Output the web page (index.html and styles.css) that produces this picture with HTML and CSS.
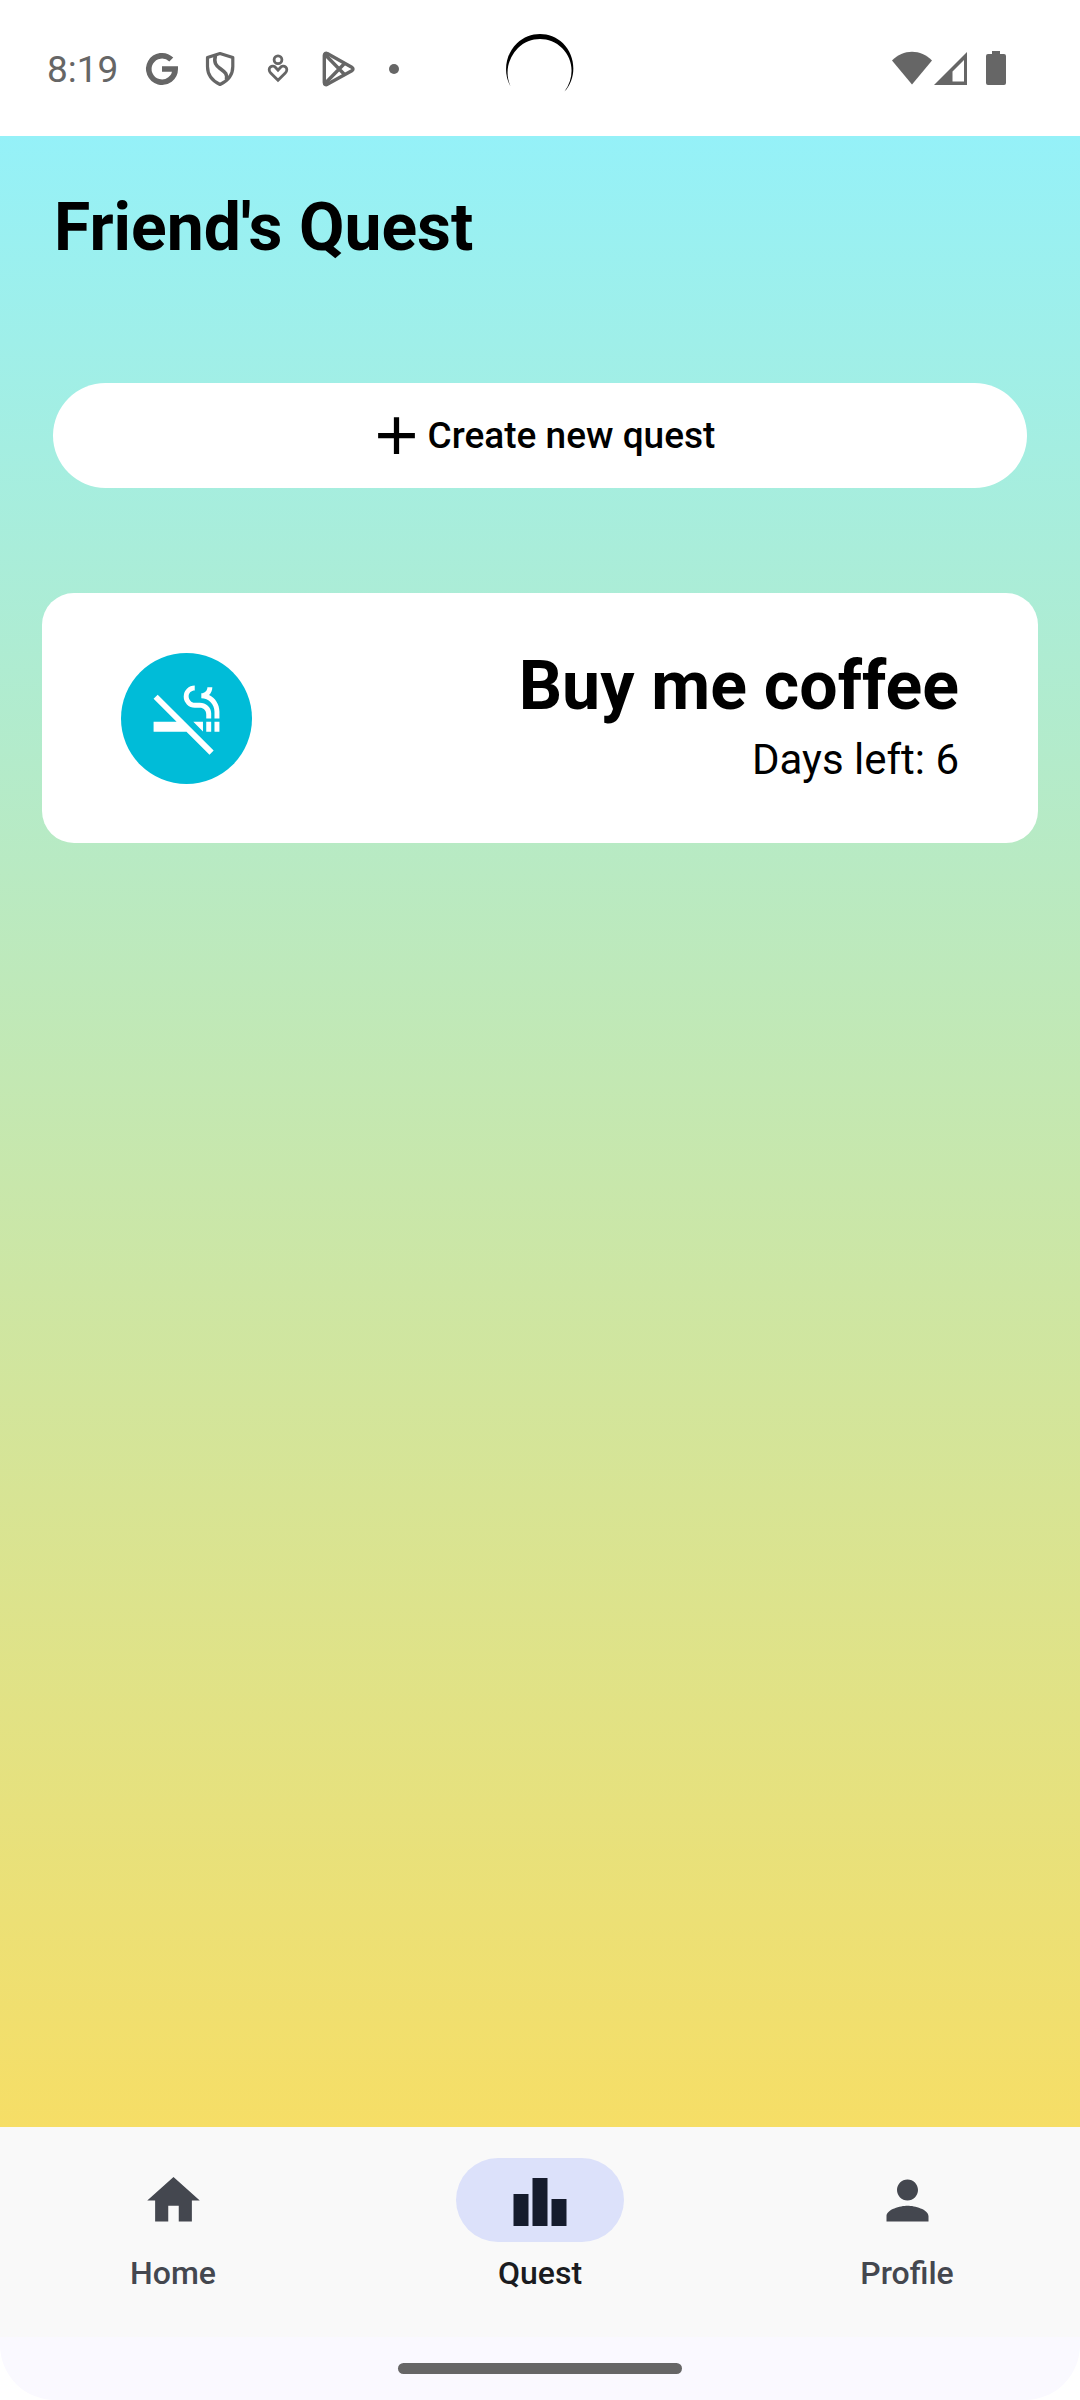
FILE: index.html
```html
<!DOCTYPE html>
<html lang="en">
<head>
<meta charset="utf-8">
<meta name="viewport" content="width=device-width, initial-scale=1">
<title>Friend's Quest</title>
<link rel="stylesheet" href="styles.css">
</head>
<body>
<header class="status">
  <time class="status-time">8:19</time>
  <div class="status-notes">
    <svg class="note" viewBox="0 0 42 42" aria-hidden="true"><path d="M30.300 12.600 A13.200 13.200 0 1 0 34.200 22 H21" fill="none" stroke="currentColor" stroke-width="5.600"/></svg>
    <svg class="note" viewBox="0 0 42 42" aria-hidden="true"><g fill="none" stroke="currentColor" stroke-width="3.200" stroke-linejoin="round"><path d="M21 6.500 8.500 10.500v9c0 8 5 14.500 12.500 18C28.500 34 33.800 27.500 33.800 19.500v-9z"/><path d="M16.500 8c-2 8 .5 10.500 4.500 13.500 5 3.700 7.500 5 6.500 11" stroke-width="3.600"/></g></svg>
    <svg class="note" viewBox="0 0 42 42" aria-hidden="true"><g fill="none" stroke="currentColor" stroke-width="2.800"><circle cx="21" cy="12.700" r="3.900"/><path d="M21 33.300 13.700 26c-2-2-1.900-4.500-.4-5.900 1.500-1.300 4-1.200 5.300.4l2.400 2.700 2.400-2.700c1.300-1.600 3.800-1.700 5.300-.4 1.500 1.400 1.600 3.900-.4 5.900z"/></g></svg>
    <svg class="note" viewBox="0 0 42 42" aria-hidden="true"><g fill="none" stroke="currentColor" stroke-width="3.400" stroke-linejoin="round"><path d="M9.300 8.500v27c0 2 1.500 2.700 3 1.800l24.500-13.600c1.600-1 1.600-2.600 0-3.500L12.300 6.600c-1.500-.9-3-.1-3 1.900z"/><path d="M10 7.500 29.500 27.500M10 36.500 29.500 16.500"/></g></svg>
    <svg class="note" viewBox="0 0 42 42" aria-hidden="true"><circle cx="21" cy="22" r="5" fill="currentColor"/></svg>
  </div>
  <svg class="camera" viewBox="0 0 68 60" aria-hidden="true"><path d="M4.500 52.500C-4 37 .5 19 11 9.200 24-3 44-3 57 9.200 70 22 71 44 58.500 57.500 69 43 67.500 25.500 56 14 44 2 24 2 12 14 2 24.500-1.500 38 4.500 52.500z"/></svg>
  <div class="status-signals">
    <svg class="wifi" viewBox="0 0 40 34" aria-hidden="true"><path d="M20 33.500 0 9.500C11-2.300 29-2.300 40 9.500z" fill="currentColor"/></svg>
    <svg class="cell" viewBox="0 0 34 34" aria-hidden="true"><path d="M33 1v33H0zM30 9 18.500 20.500V30.500H30z" fill="currentColor" fill-rule="evenodd"/></svg>
    <svg class="battery" viewBox="0 0 20 34" aria-hidden="true"><path d="M6 0h8v3h4q2 0 2 2v27q0 2-2 2H2q-2 0-2-2V5q0-2 2-2h4z" fill="currentColor"/></svg>
  </div>
</header>

<main class="screen">
  <h1 class="title">Friend's Quest</h1>
  <button class="create" type="button">
    <svg class="icon" viewBox="0 0 24 24" aria-hidden="true"><path d="M19 13h-6v6h-2v-6H5v-2h6V5h2v6h6z" fill="currentColor"/></svg>
    <span>Create new quest</span>
  </button>
  <article class="quest">
    <div class="badge">
      <svg class="badge-icon" viewBox="0 0 24 24" aria-hidden="true"><path fill="currentColor" d="M2 6l6.990 7H2v3h9.990l7 7 1.260-1.250-17-17zm18.500 7H22v3h-1.500zM18 13h1.500v3H18zm.85-8.120c.62-.61 1-1.450 1-2.380h-1.500c0 1.020-.83 1.850-1.850 1.850v1.500c2.240 0 4 1.830 4 4.070V12H22V9.920c0-2.230-1.280-4.150-3.150-5.040zM14.500 8.700h1.530c1.050 0 1.970.74 1.970 2.050V12h1.500v-1.590c0-1.800-1.600-3.160-3.470-3.160H14.500c-1.020 0-1.850-.98-1.850-2s.83-1.750 1.850-1.750V2a3.350 3.350 0 0 0 0 6.700zM17 15.930V13h-2.930z"/></svg>
    </div>
    <div class="quest-text">
      <h2 class="quest-name">Buy me coffee</h2>
      <p class="quest-days">Days left: 6</p>
    </div>
  </article>
</main>

<nav class="tabs" aria-label="Main">
  <a class="tab" href="#home">
    <span class="pill"><svg class="icon" viewBox="0 0 24 24" aria-hidden="true"><path d="M10 20v-6h4v6h5v-8h3L12 3 2 12h3v8z" fill="currentColor"/></svg></span>
    <span>Home</span>
  </a>
  <a class="tab tab-active" href="#quest" aria-current="page">
    <span class="pill"><svg class="icon" viewBox="0 0 63 63" aria-hidden="true"><path d="M4.500 25h15v32h-15zM23.500 9h15v48h-15zM42.500 30h15v27h-15z" fill="currentColor"/></svg></span>
    <span>Quest</span>
  </a>
  <a class="tab" href="#profile">
    <span class="pill"><svg class="icon" viewBox="0 0 24 24" aria-hidden="true"><path d="M12 12c2.210 0 4-1.790 4-4s-1.790-4-4-4-4 1.790-4 4 1.790 4 4 4zm0 2c-2.670 0-8 1.340-8 4v2h16v-2c0-2.660-5.330-4-8-4z" fill="currentColor"/></svg></span>
    <span>Profile</span>
  </a>
</nav>
<footer class="gesture"><div class="handle"></div></footer>
</body>
</html>
```
FILE: styles.css
```css
* {
  box-sizing: border-box;
}

body {
  margin: 0;
  min-height: 100vh;
  display: flex;
  flex-direction: column;
  background: #fff;
  color: #000;
  font-family: Roboto, "Liberation Sans", sans-serif;
}

h1,
h2,
p {
  margin: 0;
}

svg {
  display: block;
  flex: none;
}

.icon {
  width: 63px;
  height: 63px;
}

/* System status bar */
.status {
  position: relative;
  display: flex;
  align-items: center;
  height: 136px;
  padding: 0 74px 0 47px;
  color: #666;
}

.status-time {
  width: 94px;
  padding-top: 4px;
  font-size: 37px;
  line-height: 44px;
}

.status-notes {
  display: flex;
  gap: 16px;
}

.note {
  width: 42px;
  height: 42px;
}

.camera {
  position: absolute;
  top: 34px;
  left: 50%;
  width: 68px;
  height: 60px;
  margin-left: -34px;
  fill: #000;
}

.status-signals {
  display: flex;
  align-items: center;
  margin-left: auto;
}

.wifi {
  width: 40px;
  height: 34px;
}

.cell {
  width: 34px;
  height: 34px;
  margin: 0 18px 0 2px;
}

.battery {
  width: 20px;
  height: 34px;
}

/* Quest list */
.screen {
  flex: 1;
  padding: 53px 42px;
  background: linear-gradient(#95f1f8, #f6de66);
}

.title {
  padding-left: 12px;
  font-size: 66px;
  font-weight: 700;
  line-height: 78px;
}

.create {
  display: flex;
  align-items: center;
  justify-content: center;
  width: calc(100% - 22px);
  height: 105px;
  margin: 116px 11px 105px;
  padding: 0;
  border: 0;
  border-radius: 53px;
  background: #fff;
  color: #000;
  font: 500 37px/52px Roboto, "Liberation Sans", sans-serif;
}

.quest {
  display: flex;
  align-items: center;
  justify-content: space-between;
  min-height: 250px;
  padding: 52px 79px;
  border-radius: 32px;
  background: #fff;
}

.badge {
  display: flex;
  align-items: center;
  justify-content: center;
  width: 131px;
  height: 131px;
  border-radius: 50%;
  background: #00bcd8;
  color: #fff;
}

.badge-icon {
  width: 79px;
  height: 79px;
}

.quest-text {
  display: flex;
  flex-direction: column;
  gap: 4px;
  text-align: right;
}

.quest-name {
  font-size: 68px;
  font-weight: 700;
  line-height: 80px;
}

.quest-days {
  font-size: 42px;
  line-height: 60px;
}

/* Bottom navigation */
.tabs {
  display: grid;
  grid-template-columns: repeat(3, 1fr);
  gap: 21px;
  padding: 31px 0 43px;
  background: #f9f9f9;
}

.tab {
  display: flex;
  flex-direction: column;
  align-items: center;
  gap: 10px;
  color: #44474f;
  font-size: 32px;
  font-weight: 500;
  line-height: 42px;
  text-decoration: none;
}

.pill {
  display: flex;
  align-items: center;
  justify-content: center;
  width: 168px;
  height: 84px;
  border-radius: 42px;
}

.tab-active {
  color: #1a1b20;
}

.tab-active .pill {
  background: #dce1fa;
  color: #151b2c;
}

.gesture {
  display: flex;
  align-items: center;
  justify-content: center;
  height: 63px;
  border-radius: 0 0 55px 55px;
  background: #faf9ff;
}

.handle {
  width: 284px;
  height: 11px;
  border-radius: 6px;
  background: #666;
}
```
